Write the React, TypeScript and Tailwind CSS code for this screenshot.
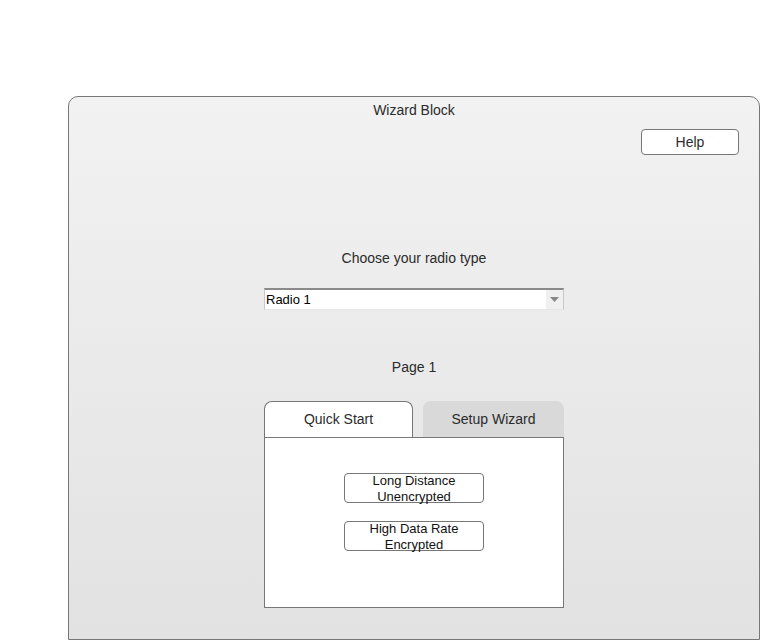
export default function App() {
  return (
    <div className="w-[760px] h-[640px] bg-white font-['Liberation_Sans',Arial,sans-serif] text-[14px] text-[#2b2b2b]">
      <div className="pt-[96px] pl-[68px]">
        {/* Wizard panel */}
        <div className="w-[692px] h-[544px] border border-[#777] rounded-t-[10px] bg-gradient-to-b from-[#f2f2f2] to-[#e2e2e2] flex flex-col">
          <div className="h-[24px] leading-[26px] text-center">Wizard Block</div>

          <div className="mt-[8px] flex justify-end pr-[20px]">
            <button className="w-[98px] h-[26px] pt-[1px] bg-white border border-[#777] rounded-[4px] text-[14px]">
              Help
            </button>
          </div>

          <div className="mt-[95px] h-[16px] leading-[17px] text-center">Choose your radio type</div>

          {/* Radio select */}
          <div className="mt-[22px] mx-auto w-[300px] h-[22px] flex bg-white border-t-2 border-t-[#8a8a8a] border-l border-l-[#c8c8c8] border-r border-r-[#c8c8c8] border-b border-b-[#e6e6e6]">
            <div className="flex-1 pl-[1px] leading-[19px] text-[13px] text-black">Radio 1</div>
            <div className="w-[17px] bg-[#f0f0f0] flex items-center justify-center">
              <svg width="9" height="5" viewBox="0 0 9 5">
                <path d="M0 0 L9 0 L4.5 5 Z" fill="#888" />
              </svg>
            </div>
          </div>

          <div className="mt-[49px] h-[16px] leading-[17px] text-center">Page 1</div>

          {/* Tabs */}
          <div className="mt-[26px] mx-auto w-[300px]">
            <div className="flex gap-[10px] h-[36px]">
              <div className="w-[149px] bg-white border border-b-0 border-[#777] rounded-t-[8px] flex items-center justify-center">
                Quick Start
              </div>
              <div className="w-[141px] pt-[1px] bg-[#d9d9d9] rounded-t-[8px] flex items-center justify-center">
                Setup Wizard
              </div>
            </div>
            <div className="h-[171px] bg-white border border-[#777] flex flex-col items-center pt-[35px] gap-[18px]">
              <button className="w-[140px] h-[30px] border border-[#777] rounded-[4px] bg-white text-[13px] leading-[16px] text-[#111]">
                <span className="block relative -top-[1px]">
                  Long Distance
                  <br />
                  Unencrypted
                </span>
              </button>
              <button className="w-[140px] h-[30px] border border-[#777] rounded-[4px] bg-white text-[13px] leading-[16px] text-[#111]">
                <span className="block relative -top-[1px]">
                  High Data Rate
                  <br />
                  Encrypted
                </span>
              </button>
            </div>
          </div>
        </div>
      </div>
    </div>
  );
}
